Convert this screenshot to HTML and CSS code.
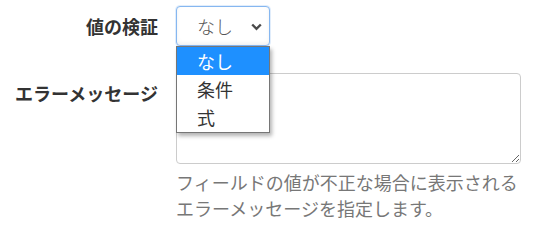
FILE: index.html
```html
<!DOCTYPE html>
<html lang="ja">
<head>
<meta charset="utf-8">
<link rel="stylesheet" href="styles.css">
</head>
<body>
<form class="form">
  <div class="row row-select">
    <label class="label">値の検証</label>
    <div class="control">
      <div class="select">
        <span class="select-value">なし</span>
        <svg class="chevron" width="11" height="8" viewBox="0 0 11 8"><path d="M1.2 1.5 L5.5 5.8 L9.8 1.5" fill="none" stroke="#4a4a4a" stroke-width="2.4"/></svg>
      </div>
    </div>
  </div>
  <div class="row row-text">
    <label class="label label-top">エラーメッセージ</label>
    <div class="control">
      <textarea class="textarea"></textarea>
      <p class="help">フィールドの値が不正な場合に表示される<br>エラーメッセージを指定します。</p>
    </div>
  </div>
  <ul class="dropdown">
    <li class="option active">なし</li>
    <li class="option">条件</li>
    <li class="option">式</li>
  </ul>
</form>
</body>
</html>
```

FILE: styles.css
```css
html, body {
  margin: 0;
  padding: 0;
  background: #fff;
}
body {
  font-family: "Noto Sans CJK JP", "Noto Sans", sans-serif;
  font-size: 18px;
  line-height: 26px;
  color: #333;
}
.form {
  position: relative;
  display: flex;
  flex-direction: column;
  gap: 27px;
  padding-top: 6px;
}
.row {
  display: grid;
  grid-template-columns: 158px 345px;
  column-gap: 18px;
}
.label {
  text-align: right;
  font-weight: bold;
  color: #333;
  align-self: center;
}
.label-top {
  align-self: start;
  padding-top: 7px;
}
.control {
  display: flex;
  flex-direction: column;
  align-items: flex-start;
}
.select {
  box-sizing: border-box;
  width: 94px;
  height: 40px;
  border: 1px solid #86b7f0;
  border-radius: 4px;
  box-shadow: inset 0 -2px 4px rgba(0, 0, 0, 0.06), 0 0 0 1px rgba(134, 183, 240, 0.25);
  display: flex;
  align-items: center;
  justify-content: space-between;
  padding: 0 7px 0 20px;
  color: #555;
  background: #fff;
}
.select-value {
  font-weight: 300;
}
.chevron {
  display: block;
  margin-top: 1px;
}
.textarea {
  box-sizing: border-box;
  display: block;
  width: 345px;
  height: 91px;
  margin: 0;
  border: 1px solid #ccc;
  border-radius: 4px;
  background: #fff;
  font: inherit;
  resize: vertical;
}
.help {
  margin: 5px 0 0;
  color: #777;
  white-space: nowrap;
}
.dropdown {
  position: absolute;
  left: 176px;
  top: 46px;
  box-sizing: border-box;
  width: 94px;
  margin: 0;
  padding: 0 0 1px;
  list-style: none;
  background: #fff;
  border: 1px solid #767676;
  box-shadow: 2px 3px 4px rgba(0, 0, 0, 0.3);
}
.option {
  height: 28px;
  line-height: 28px;
  padding-left: 20px;
  color: #333;
}
.option.active {
  background: #1e90ff;
  color: #fff;
}
```
